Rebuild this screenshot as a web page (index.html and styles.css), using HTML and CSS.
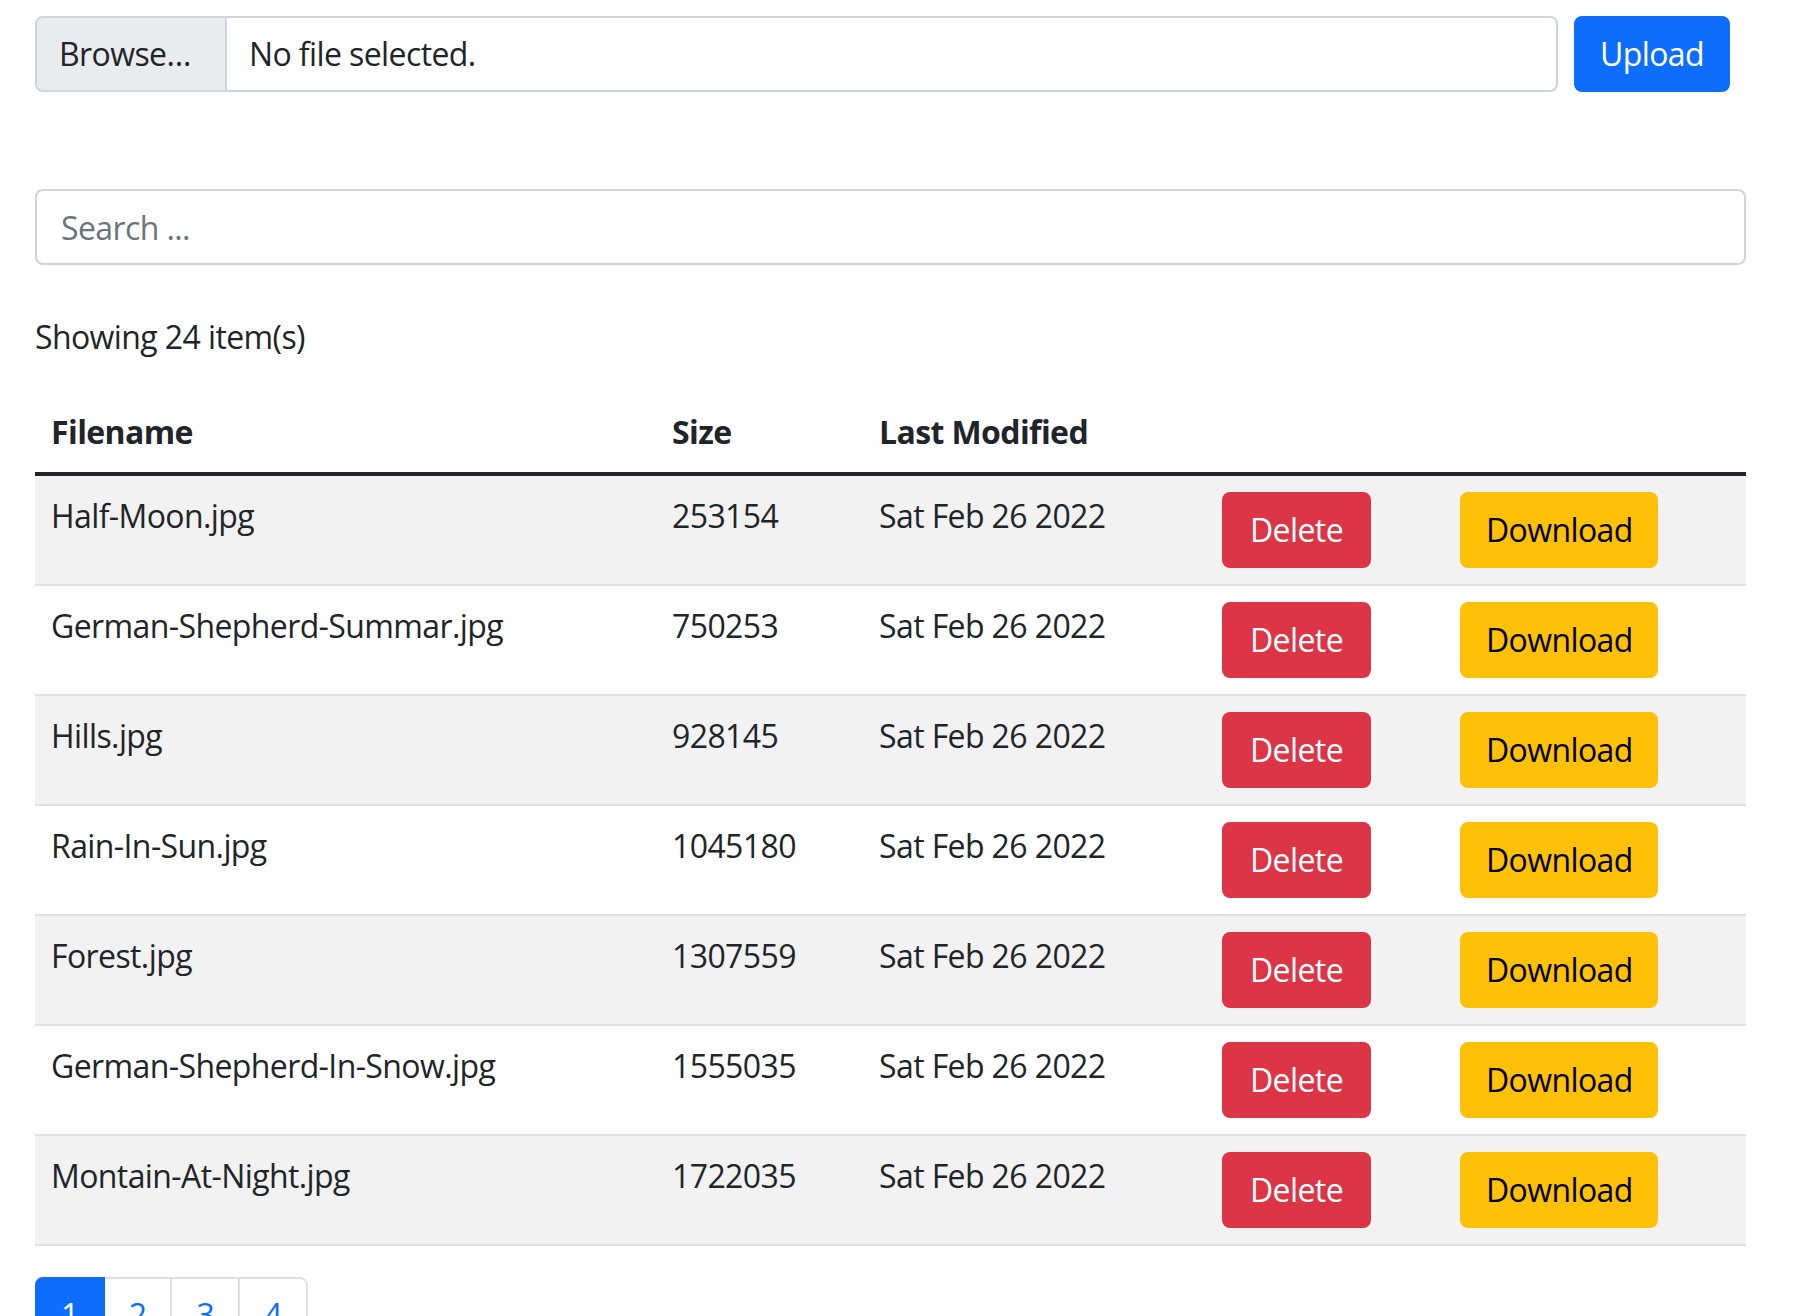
FILE: index.html
```html
<!DOCTYPE html>
<html>
<head>
<meta charset="utf-8">
<link rel="stylesheet" href="styles.css">
</head>
<body>
<div class="page">
  <form class="upload-row">
    <div class="file-group">
      <span class="file-btn">Browse…</span>
      <span class="file-name">No file selected.</span>
    </div>
    <button type="button" class="btn btn-primary">Upload</button>
  </form>

  <input class="search" type="text" placeholder="Search ...">

  <p class="count">Showing 24 item(s)</p>

  <table class="files">
    <colgroup>
      <col class="c-name"><col class="c-size"><col class="c-date"><col class="c-del"><col class="c-dl">
    </colgroup>
    <thead>
      <tr><th>Filename</th><th>Size</th><th>Last Modified</th><th></th><th></th></tr>
    </thead>
    <tbody>
      <tr><td>Half-Moon.jpg</td><td>253154</td><td>Sat Feb 26 2022</td><td><button class="btn btn-danger">Delete</button></td><td><button class="btn btn-warning">Download</button></td></tr>
      <tr><td>German-Shepherd-Summar.jpg</td><td>750253</td><td>Sat Feb 26 2022</td><td><button class="btn btn-danger">Delete</button></td><td><button class="btn btn-warning">Download</button></td></tr>
      <tr><td>Hills.jpg</td><td>928145</td><td>Sat Feb 26 2022</td><td><button class="btn btn-danger">Delete</button></td><td><button class="btn btn-warning">Download</button></td></tr>
      <tr><td>Rain-In-Sun.jpg</td><td>1045180</td><td>Sat Feb 26 2022</td><td><button class="btn btn-danger">Delete</button></td><td><button class="btn btn-warning">Download</button></td></tr>
      <tr><td>Forest.jpg</td><td>1307559</td><td>Sat Feb 26 2022</td><td><button class="btn btn-danger">Delete</button></td><td><button class="btn btn-warning">Download</button></td></tr>
      <tr><td>German-Shepherd-In-Snow.jpg</td><td>1555035</td><td>Sat Feb 26 2022</td><td><button class="btn btn-danger">Delete</button></td><td><button class="btn btn-warning">Download</button></td></tr>
      <tr><td>Montain-At-Night.jpg</td><td>1722035</td><td>Sat Feb 26 2022</td><td><button class="btn btn-danger">Delete</button></td><td><button class="btn btn-warning">Download</button></td></tr>
    </tbody>
  </table>

  <ul class="pagination">
    <li class="page-item active"><span class="page-link">1</span></li>
    <li class="page-item"><span class="page-link">2</span></li>
    <li class="page-item"><span class="page-link">3</span></li>
    <li class="page-item"><span class="page-link">4</span></li>
  </ul>
</div>
</body>
</html>
```

FILE: styles.css
```css
* { box-sizing: border-box; }
html, body { margin: 0; padding: 0; background: #fff; }
body {
  font-family: "Open Sans", "Noto Sans", sans-serif;
  font-size: 32px;
  line-height: 48px;
  color: #212529;
  letter-spacing: -0.6px;
}
.page {
  width: 1711px;
  margin-left: 35px;
  padding-top: 16px;
}
.upload-row {
  display: flex;
  gap: 16px;
  margin: 0;
}
.file-group {
  display: flex;
  width: 1523px;
  height: 76px;
  border: 2px solid #ced4da;
  border-radius: 8px;
  overflow: hidden;
}
.file-btn {
  background: #e9ecef;
  padding: 12px 22px 12px 22px;
  border-right: 2px solid #ced4da;
  width: 190px;
}
.file-name {
  padding: 12px 22px;
}
.btn {
  font-family: inherit;
  font-size: 32px;
  line-height: 48px;
  letter-spacing: -0.6px;
  padding: 12px 24px;
  border: 2px solid transparent;
  border-radius: 8px;
  height: 76px;
  cursor: pointer;
}
.btn-primary { background: #0d6efd; border-color: #0d6efd; color: #fff; width: 156px; }
.btn-danger { background: #dc3545; border-color: #dc3545; color: #fff; width: 149px; }
.btn-warning { background: #ffc107; border-color: #ffc107; color: #000; width: 198px; }
.search {
  display: block;
  width: 100%;
  height: 76px;
  margin-top: 97px;
  padding: 12px 24px;
  font-family: inherit;
  font-size: 32px;
  line-height: 48px;
  letter-spacing: -0.6px;
  color: #212529;
  border: 2px solid #ced4da;
  border-radius: 8px;
  outline: none;
}
.search::placeholder { color: #6c757d; }
.count {
  margin: 48px 0 31px 0;
}
.files {
  width: 1711px;
  border-collapse: collapse;
  table-layout: fixed;
  margin-bottom: 31px;
}
.c-name { width: 621px; }
.c-size { width: 207px; }
.c-date { width: 343px; }
.c-del { width: 238px; }
.c-dl { width: 302px; }
.files th {
  text-align: left;
  font-weight: 700;
  padding: 16px;
  border-bottom: 4px solid #212529;
  vertical-align: bottom;
}
.files td {
  padding: 16px;
  vertical-align: top;
  border-bottom: 2px solid #dee2e6;
}
.files tbody tr:nth-child(odd) td { background: #f2f2f2; }
.pagination {
  display: flex;
  list-style: none;
  margin: 0;
  padding: 0;
}
.page-link {
  display: block;
  padding: 12px 24px;
  border: 2px solid #dee2e6;
  margin-left: -2px;
  color: #0d6efd;
  background: #fff;
}
.page-item:first-child .page-link { margin-left: 0; border-radius: 8px 0 0 8px; }
.page-item:last-child .page-link { border-radius: 0 8px 8px 0; }
.page-item.active .page-link {
  background: #0d6efd;
  border-color: #0d6efd;
  color: #fff;
  position: relative;
}
```
